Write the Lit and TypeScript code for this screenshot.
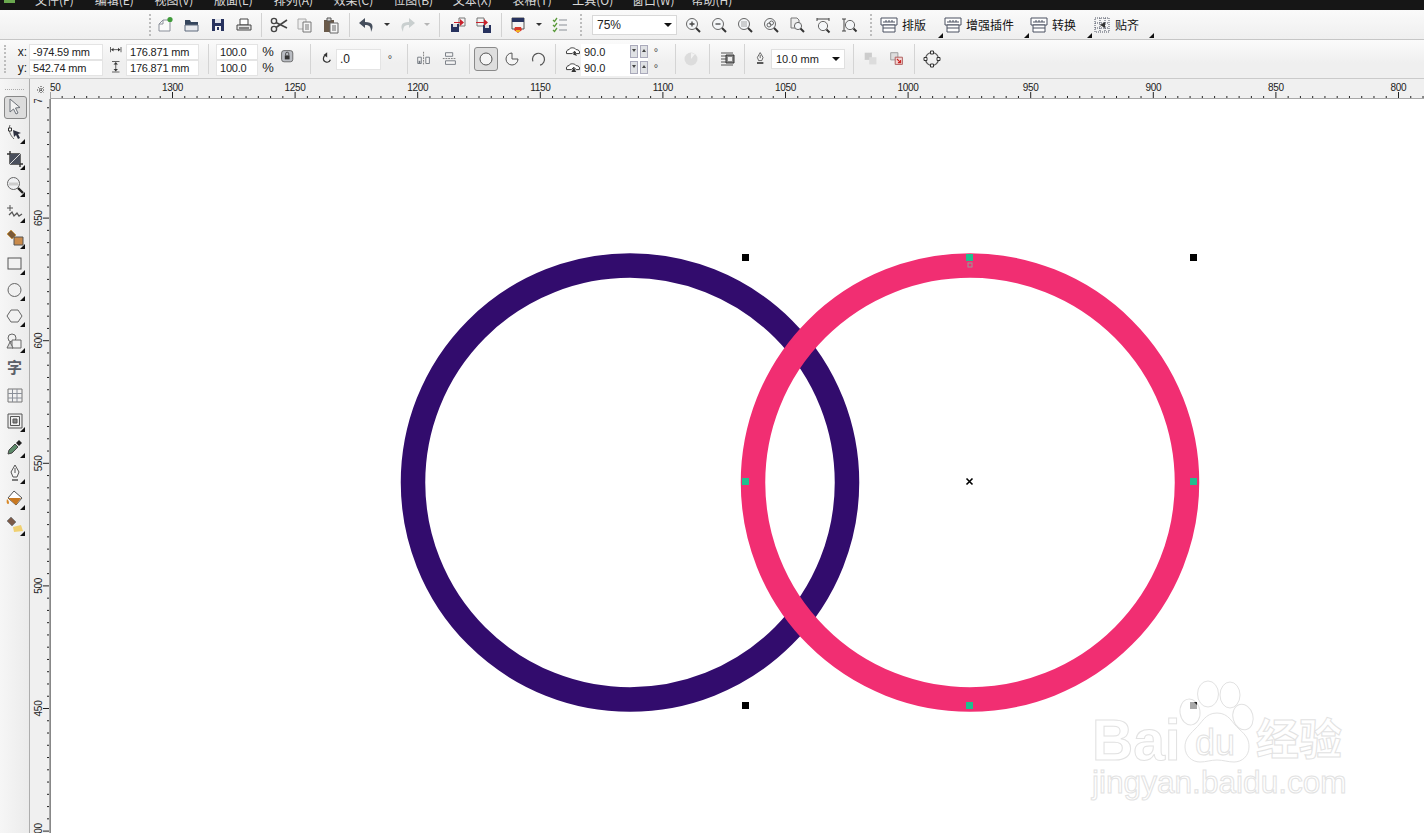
import { LitElement, html, css, svg } from 'lit';
import { customElement } from 'lit/decorators.js';

const D = '#4a5160';
const L = '#8b909a';

const icons: Record<string, unknown> = {
  new: svg`<path d="M3 9l4-4h7v11H3z" fill="#fafafa" stroke="${L}"/><path d="M3 9h4V5" fill="none" stroke="${L}"/><circle cx="14" cy="4.5" r="2.6" fill="#3f9b3a"/>`,
  open: svg`<path d="M3 5h5l1 2h7v3H3z" fill="#34455c"/><path d="M3 10h13v6H3z" fill="#e8eaee" stroke="#5f6b7c"/>`,
  save: svg`<path d="M4 4h12v12H4z" fill="#27325e"/><path d="M7 4h6v4H7z" fill="#dfe2ea"/><path d="M7 11h6v5H7z" fill="#f4f4f4"/><path d="M9 12h2v3H9z" fill="#27325e"/>`,
  print: svg`<path d="M6 4h8v6H6z" fill="#fff" stroke="#444"/><path d="M3 10h14v5H3z" fill="#e4e4e4" stroke="#444"/><path d="M5 13h10" stroke="#222"/>`,
  cut: svg`<circle cx="5" cy="6" r="2.6" fill="none" stroke="#444" stroke-width="1.4"/><circle cx="5" cy="14" r="2.6" fill="none" stroke="#444" stroke-width="1.4"/><path d="M7 7.5L18 13M7 12.5L18 5" stroke="#444" stroke-width="1.6"/>`,
  copy: svg`<path d="M3 4h8v10H3z" fill="#eee" stroke="#aaa"/><path d="M8 7h8v10H8z" fill="#f5f5f5" stroke="#777"/><path d="M10 10h4M10 12h4M10 14h4" stroke="#777"/>`,
  paste: svg`<path d="M3 5h10v12H3z" fill="#6a5a4a"/><path d="M6 3h4v3H6z" fill="#ddd" stroke="#555"/><path d="M9 8h8v10H9z" fill="#f6f6f6" stroke="#666"/><path d="M11 11h4M11 13h4M11 15h4" stroke="#666"/>`,
  undo: svg`<path d="M8 3L2 8l6 5v-3c4 0 6 1 6 7 3-6 2-10-6-10z" fill="#454e5c"/>`,
  redo: svg`<path d="M12 3l6 5-6 5v-3c-4 0-6 1-6 7-3-6-2-10 6-10z" fill="#c9cfcf"/>`,
  import: svg`<path d="M11 3h6v8h-6z" fill="#f4f4f4" stroke="#777"/><path d="M3 9h8v8H3z" fill="#27325e"/><path d="M5 9h4v3H5z" fill="#ddd"/><path d="M6 7h6V4l4 3.5-4 3.5V8H6z" fill="#c8222c"/>`,
  export: svg`<path d="M3 3h7v8H3z" fill="#f4f4f4" stroke="#777"/><path d="M9 10h8v8H9z" fill="#27325e"/><path d="M11 10h4v3h-4z" fill="#ddd"/><path d="M2 7h8V4l4 3.5-4 3.5V8H2z" fill="#c8222c"/>`,
  publish: svg`<path d="M4 3h12v11H4z" fill="#f4f4f4" stroke="#555"/><path d="M4 3h12v4H4z" fill="#27325e"/><path d="M7 12h6l1 3-4 3-4-3z" fill="#d93a2b"/><path d="M8 15h4v2H8z" fill="#f0b020"/>`,
  check: svg`<path d="M3 5l1.5 1.5L7 3M3 10l1.5 1.5L7 8M3 15l1.5 1.5L7 13" fill="none" stroke="#5a9a3a" stroke-width="1.3"/><path d="M9 5h8M9 10h8M9 15h8" stroke="#8a8f96"/>`,
  zoomIn: svg`<circle cx="9" cy="9" r="5.5" fill="#f4f6f8" stroke="#666"/><path d="M6.5 9h5M9 6.5v5" stroke="#444" stroke-width="1.3"/><path d="M13 13l4 4" stroke="#333" stroke-width="2"/>`,
  zoomOut: svg`<circle cx="9" cy="9" r="5.5" fill="#f4f6f8" stroke="#666"/><path d="M6.5 9h5" stroke="#444" stroke-width="1.3"/><path d="M13 13l4 4" stroke="#333" stroke-width="2"/>`,
  zoomSel: svg`<circle cx="9" cy="9" r="5.5" fill="#f4f6f8" stroke="#666"/><path d="M6.5 7h5M6.5 9h5M6.5 11h5" stroke="#555" stroke-dasharray="1 1"/><path d="M13 13l4 4" stroke="#333" stroke-width="2"/>`,
  zoomAll: svg`<circle cx="9" cy="9" r="5.5" fill="#f4f6f8" stroke="#666"/><circle cx="8" cy="10" r="2" fill="none" stroke="#666"/><circle cx="10.5" cy="8" r="2" fill="none" stroke="#666"/><path d="M13 13l4 4" stroke="#333" stroke-width="2"/>`,
  zoomPage: svg`<path d="M4 3h6l2 2v8H4z" fill="#eee" stroke="#777"/><circle cx="11" cy="11" r="3.6" fill="#f4f6f8" stroke="#666"/><path d="M13.5 13.5l3.5 3.5" stroke="#333" stroke-width="2"/>`,
  zoomW: svg`<path d="M4 3v3M16 3v3M4 4h12" stroke="#444"/><circle cx="10" cy="11" r="4.6" fill="#f4f6f8" stroke="#666"/><path d="M13.5 14.5l3 3" stroke="#333" stroke-width="2"/>`,
  zoomH: svg`<path d="M3 4h4M3 16h4M5 4v12" stroke="#444"/><circle cx="11" cy="10" r="4.6" fill="#f4f6f8" stroke="#666"/><path d="M14.5 13.5l3 3" stroke="#333" stroke-width="2"/>`,
  layout: svg`<path d="M2 3h16v7H2z" fill="#fff" stroke="${D}"/><path d="M4 7h12M7 5v2M10 5v2M13 5v2" stroke="${D}"/><path d="M4 10h12v7H4zM4 13h12" fill="#fff" stroke="${D}"/>`,
  snap: svg`<path d="M3 3h14v14H3zM8 3v14M13 3v14M3 8h14M3 13h14" fill="none" stroke="${D}" stroke-dasharray="1 1"/><path d="M13 7v6l-5-3z" fill="#333"/>`,
  width: svg`<path d="M2 4v7M16 4v7M3 7.500h12" stroke="#333"/><path d="M3 7.500l3-2.500v5zM15 7.500l-3-2.500v5z" fill="#333"/>`,
  height: svg`<path d="M4 2h10M4 16h10M9 3v12" stroke="#333"/><path d="M9 3l-3 3h6zM9 15l-3-3h6z" fill="#333"/>`,
  lock: svg`<rect x="2" y="2" width="14" height="14" rx="3" fill="#b9bcc2" stroke="#555"/><path d="M6 8h6v5H6z" fill="#333"/><path d="M7 8V6a2 2 0 014 0v2" fill="none" stroke="#333"/>`,
  rotate: svg`<path d="M13 11a4.500 4.500 0 11-4.500-6" fill="none" stroke="#333" stroke-width="1.5"/><path d="M9 1.500L4.500 5 9 8z" fill="#333"/>`,
  mirH: svg`<path d="M9.500 2v15" stroke="#777" stroke-dasharray="2 1"/><path d="M3 8h4v7H3zM12 8h4v7h-4z" fill="#f5f5f5" stroke="#70767e"/><path d="M4 12h2v3H4z" fill="#70767e"/>`,
  mirV: svg`<path d="M2 9.500h15" stroke="#777" stroke-dasharray="2 1"/><path d="M5 3h8v4H5zM5 12h11v4H5z" fill="#f5f5f5" stroke="#70767e"/>`,
  ell: svg`<circle cx="10" cy="10" r="6" fill="#f5f5f5" stroke="#555"/>`,
  pie: svg`<path d="M10 10V4a6 6 0 11-6 6z" fill="#f5f5f5" stroke="#555" transform="rotate(90 10 10)"/>`,
  arc: svg`<path d="M14 15a6 6 0 10-8-1" fill="none" stroke="#555" stroke-width="1.200" transform="rotate(20 10 10)"/>`,
  arcA: svg`<path d="M2 12c-1-3 1-5 3-5 1-3 7-3 9 0 3 0 5 2 4 5h-4l-2-3-3 3z" fill="#fff" stroke="#333" stroke-width="1.200"/><path d="M12 9l3 6-5-2z" fill="#333"/>`,
  arcB: svg`<path d="M2 12c-1-3 1-5 3-5 1-3 7-3 9 0 3 0 5 2 4 5h-4l-3-3-3 3z" fill="#fff" stroke="#333" stroke-width="1.200"/><path d="M8 15l3-6 3 6z" fill="#333"/>`,
  dirArc: svg`<circle cx="9" cy="10" r="6.500" fill="#dcdcdc"/><path d="M9 10V4l4 1z" fill="#f2f2f2"/>`,
  wrap: svg`<path d="M3 4h12M3 7h5M3 10h5M3 13h5M3 16h12" stroke="#555"/><path d="M8 6h8v8H8z" fill="#888" stroke="#333"/><path d="M10 8h4v4h-4z" fill="#eee"/>`,
  nib: svg`<path d="M9 2l3.500 6-1.500 4H7L5.500 8z" fill="#f5f5f5" stroke="#444"/><path d="M9 5v4" stroke="#444"/><path d="M5 15h8" stroke="#333" stroke-width="2"/>`,
  backA: svg`<path d="M3 3h8v8H3z" fill="#ccc"/><path d="M8 8h8v8H8z" fill="#dcdcdc"/>`,
  backB: svg`<path d="M3 3h8v8H3z" fill="#ddd" stroke="#999"/><path d="M8 8h8v8H8z" fill="#f2d5d2" stroke="#a55"/><path d="M10 10l4 4M14 11v3h-3" fill="none" stroke="#c22" stroke-width="1.200"/>`,
  toCurve: svg`<circle cx="10" cy="10" r="6.500" fill="none" stroke="#555" stroke-width="1.200"/><path d="M8.500 2h3v3h-3zM8.500 15h3v3h-3zM2 8.500h3v3H2zM15 8.500h3v3h-3z" fill="#f5f5f5" stroke="#333"/>`,
  pick: svg`<path d="M5 2l0 13 3.500-3 2.500 5 2-1-2.500-5 4.500-.5z" fill="#f3f3f3" stroke="#6b7078"/>`,
  shape: svg`<path d="M5 2c-2 5 0 10 4 14" fill="none" stroke="#666"/><path d="M3.500 5h3v3h-3z" fill="#fff" stroke="#333"/><path d="M8 7l8 3-3 1 2 4-2 1-2-4-2 2z" fill="#2d3140"/>`,
  crop: svg`<path d="M5 2v13h13M2 5h13v13" fill="none" stroke="#333" stroke-width="1.400"/><path d="M5 5h10v10H5z" fill="#4a4f5c"/><path d="M4 16L16 4" stroke="#ddd"/>`,
  zoom: svg`<circle cx="8.500" cy="8.500" r="6" fill="#f0f1f3" stroke="#666"/><path d="M4 9h9" stroke="#ccc" stroke-width="3"/><path d="M13 13l5 5" stroke="#222" stroke-width="2.400"/>`,
  free: svg`<path d="M2 6h6M5 3v6" stroke="#555"/><path d="M4 13l3-3 2 4 3-3 2 3 3-2" fill="none" stroke="#555" stroke-width="1.300"/>`,
  smart: svg`<path d="M6 2l5 5-4 4-5-5z" fill="#7b5a38" stroke="#c89a50"/><path d="M9 9h9v8H9z" fill="#c98a4a" stroke="#555"/>`,
  rect: svg`<rect x="3" y="4" width="13" height="11" fill="#f2f2f2" stroke="#555"/>`,
  circle: svg`<circle cx="9.500" cy="10" r="6.500" fill="#f1f1f1" stroke="#666"/>`,
  hex: svg`<path d="M6 4h7l4 6-4 6H6l-4-6z" fill="#f1f1f1" stroke="#666"/>`,
  basic: svg`<circle cx="7" cy="6" r="4" fill="#f1f1f1" stroke="#666"/><path d="M7 8h9v8H7z" fill="#f1f1f1" stroke="#666"/><path d="M2 16l3-6 3 6z" fill="#ddd" stroke="#666"/>`,
  table: svg`<path d="M3 4h14v13H3z" fill="#f1f1f1" stroke="#777"/><path d="M3 8.500h14M3 13h14M7.500 4v13M12 4v13" stroke="#8a8f99"/>`,
  frame: svg`<path d="M3 3h14v14H3z" fill="#eee" stroke="#555"/><path d="M5.500 5.500h9v9h-9z" fill="none" stroke="#555"/><path d="M8 8h4v4H8z" fill="#888" stroke="#555"/>`,
  dropper: svg`<path d="M3 17l1-4 6-6 3 3-6 6z" fill="#5d8a6a" stroke="#444"/><path d="M11 6l3-3 3 3-3 3z" fill="#222"/>`,
  pen: svg`<path d="M10 2l4 7-2 5H8L6 9z" fill="#f5f5f5" stroke="#555"/><path d="M10 5v5" stroke="#555"/><path d="M7 17h6" stroke="#555" stroke-width="1.500"/>`,
  bucket: svg`<path d="M9 2l8 7-6 7-8-7z" fill="#fff" stroke="#555"/><path d="M3 9h13l-5 7z" fill="#c87820"/><path d="M2 10c-1 3 0 5 1 5s2-2-1-5z" fill="#d98a2a"/>`,
  meshFill: svg`<path d="M6 2l5 5-4 4-5-5z" fill="#7b5a48" stroke="#888"/><path d="M8 12l8-2 2 6-9 1z" fill="#f0d070"/>`,
};

const icon = (name: string, size = 20) =>
  html`<svg class="ic" width=${size} height=${size} viewBox="0 0 20 20">${icons[name]}</svg>`;

// w is the slot width in px, so the row adds up to the real positions
const topBar: { k: string; w?: number; i?: string; label?: string }[] = [
  { k: 'grip', w: 6 },
  { k: 'btn', i: 'new' }, { k: 'btn', i: 'open' }, { k: 'btn', i: 'save' }, { k: 'btn', i: 'print' },
  { k: 'sep', w: 9 },
  { k: 'btn', i: 'cut' }, { k: 'btn', i: 'copy' }, { k: 'btn', i: 'paste' },
  { k: 'sep', w: 10 },
  { k: 'btn', i: 'undo' }, { k: 'drop', w: 14 }, { k: 'btn', i: 'redo' }, { k: 'dropoff', w: 14 },
  { k: 'sep', w: 11 },
  { k: 'btn', i: 'import' }, { k: 'btn', i: 'export' },
  { k: 'sep', w: 8 },
  { k: 'btn', i: 'publish' }, { k: 'drop', w: 16 }, { k: 'btn', i: 'check' },
  { k: 'grip', w: 16 },
  { k: 'combo' },
  { k: 'btn', i: 'zoomIn' }, { k: 'btn', i: 'zoomOut' }, { k: 'btn', i: 'zoomSel' }, { k: 'btn', i: 'zoomAll' },
  { k: 'btn', i: 'zoomPage' }, { k: 'btn', i: 'zoomW' }, { k: 'btn', i: 'zoomH' },
  { k: 'grip', w: 17 },
  { k: 'cmd', i: 'layout', label: '排版', w: 64 },
  { k: 'cmd', i: 'layout', label: '增强插件', w: 86 },
  { k: 'cmd', i: 'layout', label: '转换', w: 63 },
  { k: 'cmd', i: 'snap', label: '贴齐', w: 62 },
];

const tools: [string, boolean][] = [
  ['pick', false], ['shape', true], ['crop', true], ['zoom', true], ['free', true], ['smart', true],
  ['rect', true], ['circle', true], ['hex', true], ['basic', true], ['字', false], ['table', false],
  ['frame', true], ['dropper', true], ['pen', true], ['bucket', true], ['meshFill', true],
];

const menus = ['文件(F)', '编辑(E)', '视图(V)', '版面(L)', '排列(A)', '效果(C)', '位图(B)', '文本(X)', '表格(T)', '工具(O)', '窗口(W)', '帮助(H)'];

const STEP = 12.26;

function hRuler() {
  const out = [];
  for (let n = 0; n < 115; n++) {
    const x = 49.9 + n * STEP;
    const major = n % 10 === 0;
    out.push(svg`<line x1=${x} x2=${x} y1=${major ? 13 : 17} y2="19" stroke="#222"/>`);
    if (major) out.push(svg`<text x=${x} y="12" text-anchor="middle">${1350 - n * 5}</text>`);
  }
  return svg`<line x1="50" x2="1424" y1="19.500" y2="19.500" stroke="#a8a8a8"/>${out}`;
}

function vRuler() {
  const out = [];
  for (let n = 0; n < 62; n++) {
    const y = 95.5 + n * STEP;
    const major = n % 10 === 0;
    out.push(svg`<line x1=${major ? 13 : 17} x2="19" y1=${y} y2=${y} stroke="#222"/>`);
    if (major) out.push(svg`<text transform="translate(12 ${y}) rotate(-90)" text-anchor="middle">${700 - n * 5}</text>`);
  }
  return svg`<line x1="19.500" x2="19.500" y1="99" y2="833" stroke="#a8a8a8"/>${out}`;
}

function handle(x: number, y: number) {
  return svg`<rect x=${x - 3.5} y=${y - 3.5} width="7" height="7" fill="#000"/>`;
}

function node(x: number, y: number) {
  return svg`<rect x=${x - 3.5} y=${y - 3.5} width="7" height="7" fill="#1fc08e"/>`;
}

@customElement('app-root')
export class AppRoot extends LitElement {
  static styles = css`
    :host {
      display: grid;
      grid-template-rows: 10px 30px 39px 1fr;
      height: 100vh;
      overflow: hidden;
      background: #fff;
      font-family: "Liberation Sans", "Noto Sans CJK SC", sans-serif;
      font-size: 11px;
      color: #222;
    }
    .ic { display: block; flex: none; }

    .menu {
      display: flex;
      align-items: flex-end;
      height: 10px;
      background: #161616;
      overflow: hidden;
      padding-left: 35px;
      gap: 20.700px;
    }
    .logo { position: absolute; left: 4px; top: 0; width: 11px; height: 3px; background: #6aa84f; }
    .menu span {
      flex: none;
      width: 39px;
      white-space: nowrap;
      color: #d8d8d8;
      font: 12px/14px "Noto Sans CJK SC", sans-serif;
      padding-bottom: 3px;
    }

    .bar1 {
      display: flex;
      align-items: center;
      padding-left: 147px;
      background: linear-gradient(#fafafa, #efefef);
      border-bottom: 1px solid #c6c6c6;
      box-sizing: border-box;
    }
    .btn { flex: none; width: 26px; height: 26px; display: flex; align-items: center; justify-content: center; }
    .btn.rot { width: 25px; justify-content: flex-end; }
    .btn.nibslot { width: 20px; margin-left: 6px; }
    .slot { flex: none; height: 26px; display: flex; align-items: center; justify-content: center; }
    .slot.sep::before { content: ""; width: 1px; height: 24px; background: #d2d2d2; }
    .slot.grip::before { content: ""; height: 22px; border-left: 2px dotted #bdbdbd; }
    .slot.drop::before, .slot.dropoff::before {
      content: "";
      border: 3px solid transparent;
      border-top: 3px solid #333;
      border-bottom: 0;
    }
    .slot.dropoff::before { border-top-color: #b5b5b5; }
    .combo {
      flex: none;
      width: 85px;
      height: 20px;
      margin: 0 3px;
      box-sizing: border-box;
      padding: 0 4px;
      background: #fff;
      border: 1px solid #d8d8d8;
      display: flex;
      align-items: center;
      justify-content: space-between;
      font-size: 12px;
    }
    .caret { border: 4px solid transparent; border-top: 4px solid #111; border-bottom: 0; }
    .cmd {
      flex: none;
      position: relative;
      height: 26px;
      display: flex;
      align-items: center;
      gap: 3px;
      font: 12px "Noto Sans CJK SC", sans-serif;
      color: #111;
    }
    .corner::after {
      content: "";
      position: absolute;
      right: 0;
      bottom: 0;
      border-style: solid;
      border-width: 0 0 5px 5px;
      border-color: transparent transparent #111 transparent;
    }

    .bar2 {
      display: flex;
      align-items: center;
      padding-left: 4px;
      background: linear-gradient(#fbfbfb, #efefef 60%);
      border-bottom: 1px solid #cacaca;
      box-sizing: border-box;
      font-size: 11px;
    }
    .vline { flex: none; width: 1px; height: 30px; background: #d4d4d4; }
    .dots { flex: none; width: 0; height: 28px; border-left: 2px dotted #bdbdbd; }
    .pair { flex: none; display: grid; grid-template-rows: 16px 16px; margin-top: 1px; }
    .xy { width: 18px; text-align: right; padding-right: 2px; margin-left: 2px; line-height: 16px; font-size: 12px; }
    .field {
      box-sizing: border-box;
      background: #fff;
      border: 1px solid #e4e4e4;
      padding-left: 3px;
      line-height: 14px;
      white-space: nowrap;
      overflow: hidden;
      letter-spacing: -0.2px;
    }
    .f74 { width: 74px; }
    .f73 { width: 73px; }
    .f42 { width: 42px; padding-left: 3px; }
    .cell { display: flex; align-items: center; justify-content: center; height: 16px; }
    .w23 { box-sizing: border-box; width: 23px; padding-left: 4px; }
    .w20 { width: 20px; font-size: 13px; }
    .arcs .cell { justify-content: flex-end; }
    .lockcol { flex: none; width: 20px; display: flex; justify-content: center; margin-bottom: 5px; }
    .angle {
      flex: none;
      box-sizing: border-box;
      width: 45px;
      height: 21px;
      background: #fff;
      border: 1px solid #e4e4e4;
      padding: 0 3px;
      line-height: 19px;
      font-size: 12px;
    }
    .deg { flex: none; width: 12px; text-align: center; color: #444; font-size: 11px; }
    .gl1 { margin-left: 1px; }
    .gl3 { margin-left: 3px; }
    .gl4 { margin-left: 4px; }
    .gl2 { margin-left: 2px; }
    .gl5 { margin-left: 5px; }
    .gl6 { margin-left: 6px; }
    .gl7 { margin-left: 7px; }
    .gl8 { margin-left: 8px; }
    .gl9 { margin-left: 9px; }
    .gl11 { margin-left: 11px; }
    .gl12 { margin-left: 12px; }
    .gl13 { margin-left: 13px; }
    .selbtn {
      flex: none;
      box-sizing: border-box;
      width: 24px;
      height: 24px;
      display: flex;
      align-items: center;
      justify-content: center;
      background: #dedede;
      border: 1px solid #8a8a8a;
      border-radius: 3px;
    }
    .spinrow { width: 67px; background: #fff; justify-content: flex-start; padding-left: 3px; box-sizing: border-box; gap: 2px; }
    .spinrow span { width: 44px; }
    .spinrow b {
      display: block;
      box-sizing: border-box;
      flex: none;
      width: 8px;
      height: 13px;
      background: #dfe1e4;
      border: 1px solid #aab;
      position: relative;
    }
    .spinrow b::after {
      content: "";
      position: absolute;
      left: 1px;
      top: 3px;
      border: 2px solid transparent;
      border-top: 3px solid #444;
      border-bottom: 0;
    }
    .spinrow b.up::after { border-top: 0; border-bottom: 3px solid #444; }
    .pen-combo {
      flex: none;
      box-sizing: border-box;
      width: 74px;
      height: 20px;
      padding: 0 4px;
      background: #fff;
      border: 1px solid #e0e0e0;
      display: flex;
      align-items: center;
      justify-content: space-between;
    }

    .work { display: grid; grid-template-columns: 30px 20px 1fr; grid-template-rows: 20px 1fr; min-height: 0; }
    .tools {
      grid-row: 1 / 3;
      box-sizing: border-box;
      padding-top: 15px;
      border-right: 1px solid #adadad;
      background: linear-gradient(90deg, #f6f6f6, #ebebeb);
    }
    .tools::before {
      content: "";
      display: block;
      width: 19px;
      margin: -5px 0 4px 5px;
      border-top: 1px dotted #aaa;
    }
    .tool { position: relative; width: 29px; height: 26.150px; display: flex; align-items: center; justify-content: center; }
    .tool.corner::after { right: 4px; bottom: 2px; }
    .tool.on::before {
      content: "";
      position: absolute;
      left: 4px;
      top: 2px;
      width: 21px;
      height: 21px;
      border: 1px solid #888;
      border-radius: 3px;
      background: #dcdcdc;
    }
    .tool .ic { position: relative; }
    .tool .glyph { font: bold 15px/15px "Noto Sans CJK SC", sans-serif; color: #5c6068; margin-top: -3px; }
    .corner-box { background: #f0f0f0; position: relative; overflow: hidden; }
    .ruler { display: block; background: #f0f0f0; }
    .ruler text { font: 10px "Liberation Sans", sans-serif; fill: #222; letter-spacing: -0.3px; }
    .paper { display: block; background: #fff; }
    .paper .wm { fill: #fff; stroke: #e2e2e2; stroke-width: 1; }
    .paper .bai { font: bold 57px "Liberation Sans", sans-serif; }
    .paper .du { font: 36px "Liberation Sans", sans-serif; }
    .paper .jy { font: 31.600px "Liberation Sans", sans-serif; }
    .paper .cn { font: bold 43px "Noto Sans CJK SC", sans-serif; }
  `;

  private renderTop(it: (typeof topBar)[number]) {
    const w = it.w ? `width:${it.w}px` : '';
    if (it.k === 'btn') return html`<div class="btn">${icon(it.i!)}</div>`;
    if (it.k === 'combo') return html`<div class="combo"><span>75%</span><i class="caret"></i></div>`;
    if (it.k === 'cmd') return html`<div class="cmd corner" style=${w}>${icon(it.i!)}<span>${it.label}</span></div>`;
    return html`<div class="slot ${it.k}" style=${w}></div>`;
  }

  render() {
    return html`
      <div class="menu">
        <i class="logo"></i>
        ${menus.map(m => html`<span>${m}</span>`)}
      </div>

      <div class="bar1">${topBar.map(it => this.renderTop(it))}</div>

      <div class="bar2">
        <div class="dots"></div>
        <div class="pair gl1"><div class="xy">x:</div><div class="xy">y:</div></div>
        <div class="pair"><div class="field f74">-974.59 mm</div><div class="field f74">542.74 mm</div></div>
        <div class="pair w23">
          <div class="cell">${icon('width', 15)}</div>
          <div class="cell">${icon('height', 15)}</div>
        </div>
        <div class="pair"><div class="field f73">176.871 mm</div><div class="field f73">176.871 mm</div></div>
        <div class="vline gl9"></div>
        <div class="pair gl7"><div class="field f42">100.0</div><div class="field f42">100.0</div></div>
        <div class="pair w20"><div class="cell">%</div><div class="cell">%</div></div>
        <div class="lockcol">${icon('lock', 16)}</div>
        <div class="vline gl12"></div>
        <div class="btn rot">${icon('rotate', 16)}</div>
        <div class="angle">.0</div>
        <div class="deg gl3">°</div>
        <div class="vline gl11"></div>
        <div class="btn gl3">${icon('mirH', 18)}</div>
        <div class="btn">${icon('mirV', 18)}</div>
        <div class="vline gl6"></div>
        <div class="selbtn gl4">${icon('ell')}</div>
        <div class="btn gl1">${icon('pie')}</div>
        <div class="btn">${icon('arc')}</div>
        <div class="vline gl4"></div>
        <div class="pair w20 arcs gl5">
          <div class="cell">${icon('arcA', 16)}</div>
          <div class="cell">${icon('arcB', 16)}</div>
        </div>
        <div class="pair">
          <div class="cell spinrow"><span>90.0</span><b></b><b class="up"></b></div>
          <div class="cell spinrow"><span>90.0</span><b></b><b class="up"></b></div>
        </div>
        <div class="pair deg gl2"><div class="cell">°</div><div class="cell">°</div></div>
        <div class="vline gl13"></div>
        <div class="btn gl3">${icon('dirArc')}</div>
        <div class="vline gl4"></div>
        <div class="btn gl5">${icon('wrap')}</div>
        <div class="vline gl3"></div>
        <div class="btn nibslot">${icon('nib', 16)}</div>
        <div class="pen-combo"><span>10.0 mm</span><i class="caret"></i></div>
        <div class="vline gl8"></div>
        <div class="btn gl4">${icon('backA', 18)}</div>
        <div class="btn">${icon('backB', 18)}</div>
        <div class="vline gl4"></div>
        <div class="btn gl4">${icon('toCurve')}</div>
      </div>

      <div class="work">
        <div class="tools">
          ${tools.map(([n, c], i) => html`
            <div class="tool ${c ? 'corner' : ''} ${i === 0 ? 'on' : ''}">
              ${icons[n] ? icon(n) : html`<span class="glyph">${n}</span>`}
            </div>`)}
        </div>
        <div class="corner-box">
          <svg width="20" height="20" viewBox="0 0 20 20">
            <path d="M7 11h8M11 7v8" stroke="#333" stroke-dasharray="1 1"/>
            <path d="M8 8l6 6M14 8l-6 6" stroke="#555" stroke-dasharray="1 1"/>
          </svg>
        </div>
        <svg class="ruler" width="1374" height="20" viewBox="50 0 1374 20">${hRuler()}</svg>
        <svg class="ruler" width="20" height="734" viewBox="0 99 20 734">${vRuler()}</svg>
        <svg class="paper" width="1374" height="734" viewBox="50 99 1374 734">
          <line x1="50.500" x2="50.500" y1="99" y2="833" stroke="#888"/>
          <circle cx="630" cy="482.500" r="217" fill="none" stroke="#320c6d" stroke-width="24.500"/>
          <circle cx="970" cy="482.500" r="217" fill="none" stroke="#f12e72" stroke-width="24.500"/>

          ${handle(745.5, 257.5)}${handle(1193.5, 257.5)}${handle(745.5, 705.5)}
          ${node(969.5, 257.5)}${node(745.5, 481.5)}${node(1193.5, 481.5)}${node(969.5, 705.5)}
          <rect x="968" y="263" width="4" height="4" fill="none" stroke="#999"/>
          <path d="M966.500 478.500l6 6M972.500 478.500l-6 6" stroke="#000" stroke-width="1.600"/>

          <g class="wm">
            <ellipse cx="1190" cy="712" rx="10" ry="13" transform="rotate(-8 1190 712)"/>
            <ellipse cx="1208" cy="694" rx="10.500" ry="13"/>
            <ellipse cx="1230" cy="695" rx="10" ry="13"/>
            <ellipse cx="1243" cy="717" rx="10" ry="13" transform="rotate(-15 1243 717)"/>
            <path d="M1217 713c12 0 15 10 22 16 8 7 10 11 10 18 0 9-7 15-15 15-6 0-11-2-17-2s-11 2-17 2c-8 0-15-6-15-15 0-7 3-11 10-18 7-6 10-16 22-16z"/>
            <text class="du" x="1195" y="755">du</text>
            <text class="bai" x="1092" y="760">Bai</text>
            <text class="cn" x="1256" y="755">经验</text>
            <text class="jy" x="1092" y="793">jingyan.baidu.com</text>
          </g>
          <rect x="1190" y="702" width="7" height="7" fill="#a8a8a8"/>
          <path d="M1194 702h3v3z" fill="#222"/>
        </svg>
      </div>
    `;
  }
}
